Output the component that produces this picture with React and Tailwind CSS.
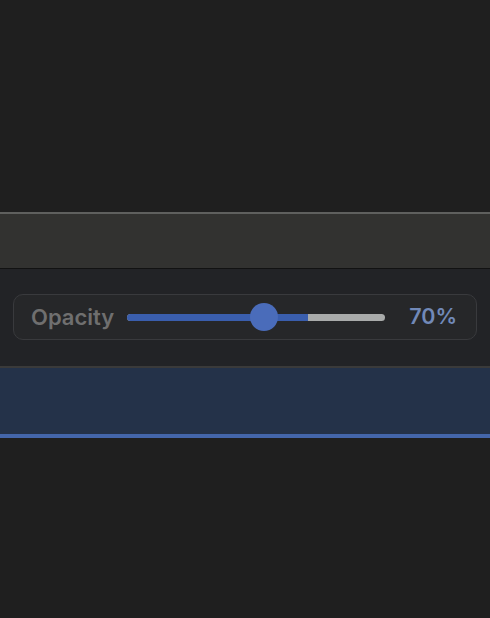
export default function App() {
  const value = 70;
  const thumb = 53; // thumb sits a little behind the fill, as in the shot

  return (
    <div className="w-[490px] h-[618px] flex flex-col bg-[#1f1f1f] overflow-hidden" style={{ fontFamily: 'Inter, "Open Sans", sans-serif' }}>
      {/* Empty canvas */}
      <div className="h-[212px] bg-[#1f1f1f]" />

      {/* Toolbar strip */}
      <div className="h-[57px] bg-[#323230] border-t-2 border-t-[#5f605e] border-b border-b-[#121212]" />

      {/* Opacity control */}
      <div className="h-[97px] bg-[#222326] pt-[25px]">
        <div className="mx-[13px] h-[46px] rounded-[10px] border border-[#393a3d] bg-[#262729] flex items-center pl-[17px] pr-[19px]">
          <span className="w-[96px] text-[22px] font-semibold text-[#6f6f6f] leading-none">Opacity</span>
          <div className="relative w-[258px] h-[28px] flex items-center">
            <div className="w-full h-[7px] rounded-full bg-[#a9abaa] overflow-hidden">
              <div className="h-full bg-[#3a5ead]" style={{ width: `${value}%` }} />
            </div>
            <div
              className="absolute top-0 w-[28px] h-[28px] rounded-full bg-[#4a6cba] -translate-x-1/2"
              style={{ left: `${thumb}%` }}
            />
          </div>
          <span className="flex-1 text-right text-[21.5px] font-semibold text-[#7189b8] leading-none">{value}%</span>
        </div>
      </div>

      {/* Selected row */}
      <div className="h-[72px] bg-[#243249] border-t-2 border-t-[#3a3a3a] border-b-4 border-b-[#4466aa]" />

      <div className="flex-1 bg-[#1f1f1f]" />
    </div>
  );
}
